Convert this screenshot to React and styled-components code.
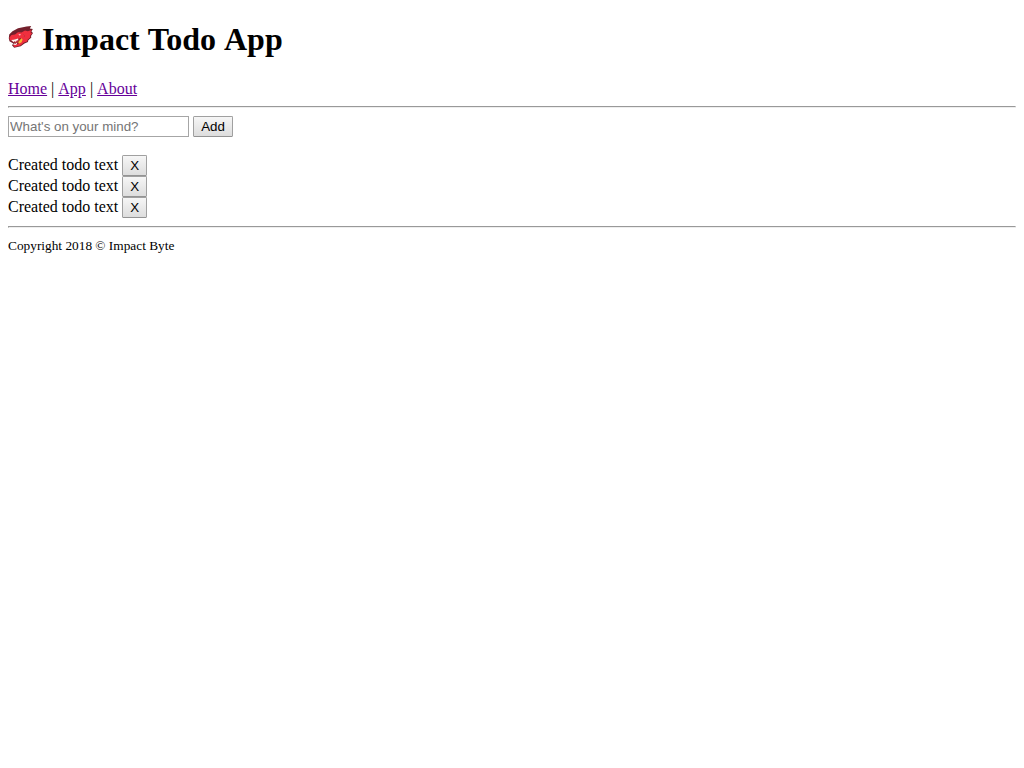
import React from "react";
import styled, { createGlobalStyle } from "styled-components";

const GlobalStyle = createGlobalStyle`
  body {
    margin: 0 8px 8px;
    background: #fff;
    color: #000;
    font: 16px/18px "Liberation Serif", "Times New Roman", serif;
  }
`;

const Title = styled.h1`
  margin: 21.44px 0;
  font-size: 32px;
  line-height: 37px;
  font-weight: bold;
`;

const Word = styled.span`
  display: inline-block;
`;

const Logo = styled.svg`
  width: 26px;
  height: 26px;
  vertical-align: baseline;
`;

const NavLink = styled.a`
  display: inline-block;
  color: #660099;
  text-decoration: underline;
`;

const Divider = styled.hr`
  margin: 8px 0;
  border: 1px solid;
  border-color: #999 #eee #eee #999;
`;

const Form = styled.form`
  display: flex;
  gap: 4px;
  margin: 0 0 18px;
`;

const TextInput = styled.input`
  box-sizing: border-box;
  width: 181px;
  height: 21px;
  margin: 0;
  padding: 1px;
  border: 1px solid #a6a6a6;
  border-radius: 0;
  background: #fff;
  font: 13.333px "Liberation Sans", Arial, sans-serif;
  &::placeholder {
    color: #757575;
  }
`;

const Button = styled.button`
  box-sizing: border-box;
  width: ${(p) => p.$width}px;
  height: 21px;
  margin: 0;
  padding: 1px 0;
  border: 1px solid #a0a0a0;
  border-bottom-color: #939393;
  border-radius: 1.5px;
  background: linear-gradient(#f6f6f6, #dddddd);
  color: #000;
  font: 13.333px "Liberation Sans", Arial, sans-serif;
  text-align: center;
`;

const Todo = styled.div`
  display: flex;
  gap: 4px;
  height: 21px;
  align-items: flex-start;
`;

const TodoText = styled.span`
  line-height: 20px;
`;

const Footer = styled.footer`
  font-size: 13.333px;
  line-height: 19px;
`;

const todos = ["Created todo text", "Created todo text", "Created todo text"];

function DragonLogo() {
  return (
    <Logo viewBox="0 0 26 26" aria-hidden="true">
      <path
        d="M.8 14.2 1.2 10.5 4.5 7.2 10 4.3 18.5 2.4 23.2 2 21.8 4.6 24.8 4.9 23.5 7.5 25 9 23 12 23.3 13.4 20.2 16.4 20 18 16.5 19.5 12.8 22.2 6.2 23.7 4 21.3 5.3 19.4 1.5 17.2Z"
        fill="#74202c"
      />
      <path
        d="M1.4 13.6 3.5 11 7 10.5 10 8.2 13.5 8.5 17 6.6 19.8 7.3 23.6 6 22.4 8.2 24 9.4 22 11.8 22.4 13.2 19.4 15.9 19.2 17.4 16 18.6 12.4 21.4 6.6 22.9 5.1 21.3 9.7 20.2 12.3 17.5 13.2 14.1 9.4 15.3 5.4 16.3 2 16.2Z"
        fill="#f02f3e"
      />
      <path d="M3.4 16.2 9.4 14.9 12 14.2 11 17.7 8.9 19.4 5.6 20.1 7 18.5 4.2 18Z" fill="#b3303b" />
      <path d="m10.9 17.3 2.4-3 1.3 1.1-1 2.9-2.2 1.2-1.2-.8Z" fill="#f7b62f" />
      <path d="m3.1 16.1 2.5-.4 2-.5 2.5-.7.1 1.8-1.5.2-.9 1.4-1.1-.9-1.1 1.2-.9-1Z" fill="#fff6f1" />
      <path d="m5.2 20.8.9-1.8.8 1.2 1.6-1.5.8 1.2-1.8 1Z" fill="#fff6f1" />
      <path d="m10.3 10.8 2.3-.9-.5 1.5Z" fill="#fff" />
      <path
        d="m15.4 10.4 1.2 1.2-.4 1.6"
        fill="none"
        stroke="#b3303b"
        strokeWidth=".6"
      />
    </Logo>
  );
}

export default function App() {
  return (
    <>
      <GlobalStyle />
      <Title>
        <DragonLogo /> Impact <Word>Todo</Word> <Word>App</Word>
      </Title>
      <nav>
        <NavLink href="#home">Home</NavLink> | <NavLink href="#app">App</NavLink> |{" "}
        <NavLink href="#about">About</NavLink>
      </nav>
      <Divider />
      <Form onSubmit={(e) => e.preventDefault()}>
        <TextInput placeholder="What's on your mind?" />
        <Button $width={40}>Add</Button>
      </Form>
      {todos.map((text, i) => (
        <Todo key={i}>
          <TodoText>{text}</TodoText>
          <Button $width={25}>X</Button>
        </Todo>
      ))}
      <Divider />
      <Footer>Copyright 2018 © Impact Byte</Footer>
    </>
  );
}
